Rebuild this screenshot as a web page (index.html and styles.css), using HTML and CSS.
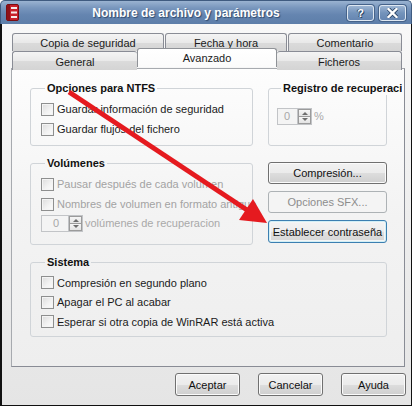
FILE: index.html
```html
<!DOCTYPE html>
<html lang="es">
<head>
<meta charset="utf-8">
<title>Nombre de archivo y parámetros</title>
<link rel="stylesheet" href="styles.css">
</head>
<body>
<div class="window">
  <div class="titlebar">
    <svg class="app-icon" width="13" height="17" viewBox="0 0 13 17">
      <rect x="0.5" y="0.5" width="12" height="16" rx="1.5" fill="#c8202a" stroke="#7a0d12"/>
      <rect x="1" y="1" width="3" height="15" fill="#8e1118"/>
      <rect x="5" y="3" width="6" height="2" fill="#f6e9e9"/>
      <rect x="5" y="7.5" width="6" height="2" fill="#f6e9e9"/>
      <rect x="5" y="12" width="6" height="2" fill="#f6e9e9"/>
    </svg>
    <div class="title">Nombre de archivo y parámetros</div>
    <div class="caption-btns">
      <div class="cap-btn">?</div>
      <div class="cap-btn">
        <svg width="11" height="10" viewBox="0 0 11 10">
          <path d="M1.5 1 L9.5 9 M9.5 1 L1.5 9" stroke="#2b4566" stroke-width="4" stroke-linecap="square"/>
          <path d="M1.5 1 L9.5 9 M9.5 1 L1.5 9" stroke="#ffffff" stroke-width="2.4" stroke-linecap="square"/>
        </svg>
      </div>
    </div>
  </div>
  <div class="client">
    <div class="tabs">
      <div class="tabrow back">
        <div class="tab w-copia">Copia de seguridad</div>
        <div class="tab w-fecha">Fecha y hora</div>
        <div class="tab w-coment">Comentario</div>
      </div>
      <div class="tabrow front">
        <div class="tab w-general">General</div>
        <div class="tab active w-avanz">Avanzado</div>
        <div class="tab w-fich">Ficheros</div>
      </div>
    </div>
    <div class="panel">
      <div class="panel-body">
        <fieldset class="group g-ntfs">
          <legend>Opciones para NTFS</legend>
          <label class="check"><span class="box"></span>Guardar información de seguridad</label>
          <label class="check"><span class="box"></span>Guardar flujos del fichero</label>
        </fieldset>
        <fieldset class="group g-reg">
          <legend>Registro de recuperación</legend>
          <div class="spin-row disabled">
            <div class="spinner small"><span class="spin-val">0</span><span class="spin-btns"><span class="sb up"></span><span class="sb down"></span></span></div>
            <span class="unit">%</span>
          </div>
        </fieldset>
        <fieldset class="group g-vol">
          <legend>Volúmenes</legend>
          <label class="check disabled"><span class="box"></span>Pausar después de cada volumen</label>
          <label class="check disabled"><span class="box"></span>Nombres de volumen en formato antiguo</label>
          <div class="spin-row disabled">
            <div class="spinner wide"><span class="spin-val">0</span><span class="spin-btns"><span class="sb up"></span><span class="sb down"></span></span></div>
            <span class="unit">volúmenes de recuperacion</span>
          </div>
        </fieldset>
        <div class="btncol">
          <div class="btn">Compresión...</div>
          <div class="btn disabled">Opciones SFX...</div>
          <div class="btn focused">Establecer contraseña</div>
        </div>
        <fieldset class="group g-sys">
          <legend>Sistema</legend>
          <label class="check"><span class="box"></span>Compresión en segundo plano</label>
          <label class="check"><span class="box"></span>Apagar el PC al acabar</label>
          <label class="check"><span class="box"></span>Esperar si otra copia de WinRAR está activa</label>
        </fieldset>
      </div>
    </div>
    <div class="footer">
      <div class="btn fbtn">Aceptar</div>
      <div class="btn fbtn">Cancelar</div>
      <div class="btn fbtn">Ayuda</div>
    </div>
  </div>
  <svg class="arrow" width="413" height="407" viewBox="0 0 413 407">
    <line x1="69" y1="92" x2="247" y2="210" stroke="#e51a1f" stroke-width="5"/>
    <polygon points="267,223 239,220 253,199" fill="#e51a1f"/>
  </svg>
</div>
</body>
</html>
```
FILE: styles.css
```css
* { box-sizing: border-box; }
html, body { margin: 0; padding: 0; background: #ffffff; }
body {
  font-family: "Liberation Sans", Arial, sans-serif;
  font-size: 11px;
  color: #1b1b1b;
}
.window {
  position: relative;
  width: 412px;
  height: 406px;
  display: flex;
  flex-direction: column;
}
.titlebar {
  height: 24px;
  flex: none;
  display: flex;
  align-items: center;
  padding: 0 5px 0 5px;
  border-radius: 5px 5px 0 0;
  background: linear-gradient(#9ab3d1 0%, #7896bd 30%, #6585b0 60%, #5d7ea9 100%);
  border: 1px solid #3f5b80;
  border-bottom: none;
}
.app-icon { flex: none; display: block; }
.title {
  flex: 1;
  text-align: center;
  color: #ffffff;
  font-weight: bold;
  font-size: 12px;
  text-shadow: 1px 1px 1px #2f4a6e;
  padding-left: 6px;
  margin-top: 1px;
}
.caption-btns { display: flex; gap: 5px; margin-top: 0px; }
.cap-btn {
  width: 27px;
  height: 16px;
  border: 1px solid #dfe8f2;
  border-radius: 3px;
  background: linear-gradient(#9cb4d2, #7393bb 50%, #6686b1);
  box-shadow: 0 0 0 1px #46638a;
  color: #fff;
  font-weight: bold;
  font-size: 11px;
  display: flex;
  align-items: center;
  justify-content: center;
  text-shadow: 1px 1px 0 #2b4566, -1px 0 0 #2b4566;
}
.cap-btn svg { display: block; }
.client {
  flex: 1;
  border-left: 2px solid #111;
  border-right: 1px solid #111;
  border-bottom: 1px solid #111;
  background: linear-gradient(#f8f8f8, #ececec 60%, #e5e5e5);
  padding-top: 9px;
  display: flex;
  flex-direction: column;
}
.tabs { margin-left: 10px; position: relative; z-index: 1; margin-bottom: -1px; }
.tabrow { display: flex; height: 18px; }
.tabrow.back { gap: 1px; }
.tab {
  height: 18px;
  border: 1px solid #898c95;
  border-bottom: none;
  border-radius: 3px 3px 0 0;
  background: linear-gradient(#f4f4f4, #e9e9e9 50%, #dbdbdb 51%, #d4d4d4);
  display: flex;
  align-items: center;
  justify-content: center;
  padding-top: 1px;
  color: #1b1b1b;
  white-space: nowrap;
}
.tabrow.front .tab { height: 19px; padding-top: 2px; }
.tab.active {
  height: 22px;
  margin-top: -3px;
  background: linear-gradient(#ffffff, #fbfbfb);
  border-color: #8f9297;
  padding-top: 0;
  padding-bottom: 3px;
  position: relative;
}
.w-copia { width: 152px; }
.w-fecha { width: 122px; }
.w-coment { width: 114px; }
.w-general { width: 125px; border-right: none; }
.w-avanz { width: 140px; }
.w-fich { width: 125px; border-left: none; }
.panel {
  margin-left: 9px;
  width: 394px;
  height: 299px;
  border: 1px solid #898c95;
  border-color: #a7aaaf #898c95 #898c95 #a7aaaf;
  background: linear-gradient(#fdfdfd, #f3f3f3 50%, #eeeeee);
  padding: 13px 0 0 18px;
}
.panel-body {
  width: 372px;
  padding-right: 15px;
  overflow: hidden;
  display: grid;
  grid-template-columns: 223px 119px;
  grid-template-rows: 64px 88px 81px;
  column-gap: 15px;
  row-gap: 11px;
}
.group {
  margin: 0;
  padding: 0 0 0 10px;
  border: 1px solid #d0d4d8;
  border-radius: 3px;
  min-width: 0;
}
.group legend {
  font-weight: bold;
  padding: 0 2px;
  margin-left: 4px;
  line-height: 13px;
  white-space: nowrap;
  color: #111;
}
.g-ntfs { padding-top: 4px; }
.g-vol { padding-top: 4px; }
.g-sys { grid-column: 1 / 3; padding-top: 4px; }
.g-reg { padding-top: 12px; padding-left: 8px; }
.check {
  display: flex;
  align-items: center;
  height: 20px;
  gap: 3px;
  white-space: nowrap;
}
.g-sys .check { height: 19.5px; }
.box {
  width: 13px;
  height: 13px;
  flex: none;
  border: 1px solid #8e8f8f;
  background: linear-gradient(135deg, #dcdcdc, #f3f3f3 60%, #fbfbfb);
  box-shadow: inset 0 0 0 1px #f4f4f4;
}
.check.disabled { color: #a3a3a3; }
.spin-row { display: flex; align-items: center; height: 18px; gap: 2px; color: #a3a3a3; white-space: nowrap; }
.spinner {
  height: 17px;
  border: 1px solid #c2c4c7;
  background: #f4f4f4;
  display: flex;
  flex: none;
}
.spinner.small { width: 35px; }
.spinner.wide { width: 42px; }
.spin-val { flex: 1; display: flex; align-items: center; justify-content: flex-end; padding-right: 6px; color: #a8a8a8; font-size: 11px; }
.spinner.small .spin-val { padding-right: 7px; }
.spinner.wide .spin-val { padding-right: 9px; }
.spin-btns { width: 14px; display: flex; flex-direction: column; border-left: 1px solid #c2c4c7; }
.sb {
  flex: 1;
  border: 1px solid #9b9b9b;
  background: linear-gradient(#f6f6f6, #e3e3e3);
  position: relative;
}
.sb + .sb { border-top: none; }
.sb::after {
  content: "";
  position: absolute;
  left: 3px;
  width: 0; height: 0;
  border-left: 3px solid transparent;
  border-right: 3px solid transparent;
}
.sb.up::after { top: 2px; border-bottom: 3px solid #6d6d6d; }
.sb.down::after { top: 1px; border-top: 3px solid #6d6d6d; }
.unit { color: #a9a9a9; }
.btncol { display: flex; flex-direction: column; gap: 7px; padding-top: 5px; }
.btn {
  height: 22px;
  border: 1px solid #707070;
  border-radius: 3px;
  background: linear-gradient(#f2f2f2, #ebebeb 50%, #dddddd 51%, #cfcfcf);
  box-shadow: inset 0 0 0 1px #fbfbfb;
  display: flex;
  align-items: center;
  justify-content: center;
  color: #111;
  white-space: nowrap;
}
.btn.disabled {
  border-color: #adb2b5;
  background: #f4f4f4;
  color: #8d8d8d;
  box-shadow: none;
}
.btn.focused {
  border-color: #3c7fb1;
  box-shadow: inset 0 0 0 1px #48d7fb33, inset 0 0 0 2px #f5f5f5;
  background: linear-gradient(#f4f4f4, #ededed 50%, #e0e0e0 51%, #d6d6d6);
  height: 23px;
}
.footer {
  display: flex;
  justify-content: flex-end;
  gap: 18px;
  padding: 6px 5px 0 0;
}
.fbtn { width: 65px; height: 23px; }
.arrow {
  position: absolute;
  left: 0;
  top: 0;
  pointer-events: none;
}
```
